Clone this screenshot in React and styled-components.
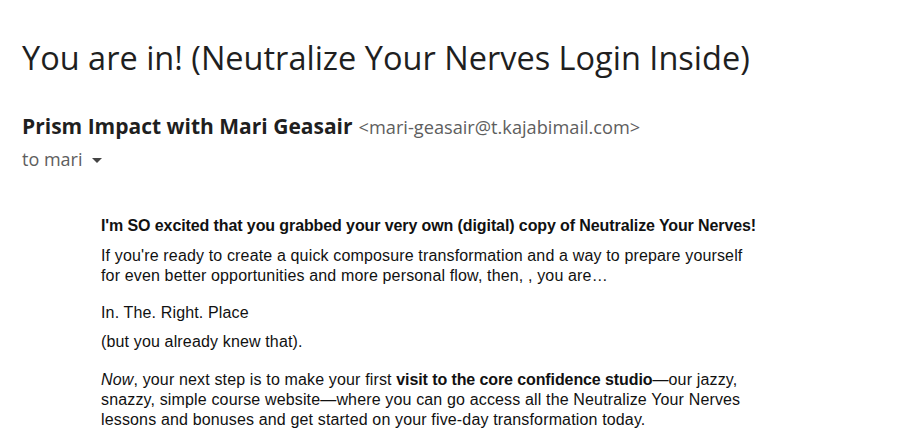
import React from 'react';
import styled, { createGlobalStyle } from 'styled-components';

const Global = createGlobalStyle`
  body {
    margin: 0;
    background: #fff;
    font-family: "Open Sans", Roboto, sans-serif;
  }
`;

const Page = styled.div`
  padding: 38px 0 0 22px;
`;

const Subject = styled.h1`
  margin: 0;
  font-family: "Open Sans", Roboto, sans-serif;
  font-weight: 400;
  font-size: 32.5px;
  line-height: 40px;
  color: #1f1f1f;
`;

const SenderBlock = styled.div`
  margin-top: 35px;
`;

const SenderRow = styled.div`
  display: flex;
  align-items: baseline;
  gap: 6px;
  line-height: 26px;
`;

const SenderName = styled.span`
  font-weight: 700;
  font-size: 21px;
  color: #1f1f1f;
`;

const SenderMail = styled.span`
  font-size: 18.2px;
  color: #5e5e5e;
`;

const ToRow = styled.div`
  display: flex;
  align-items: center;
  gap: 9px;
  margin-top: 8px;
  font-size: 18px;
  line-height: 22px;
  color: #5e5e5e;
`;

const Caret = styled.span`
  width: 0;
  height: 0;
  margin-top: 2px;
  border-left: 5.5px solid transparent;
  border-right: 5.5px solid transparent;
  border-top: 5.5px solid #444;
`;

const Body = styled.div`
  margin: 46px 0 0 79px;
  font-family: "Liberation Sans", Arial, sans-serif;
  font-size: 16px;
  color: #111;

  strong {
    letter-spacing: -0.1px;
  }
`;

const Para = styled.p`
  margin: 0 0 ${p => p.$gap}px;
  line-height: 20px;
  letter-spacing: 0.15px;
`;

export default function App() {
  return (
    <Page>
      <Global />
      <Subject>You are in! (Neutralize Your Nerves Login Inside)</Subject>
      <SenderBlock>
        <SenderRow>
          <SenderName>Prism Impact with Mari Geasair</SenderName>
          <SenderMail>&lt;mari-geasair@t.kajabimail.com&gt;</SenderMail>
        </SenderRow>
        <ToRow>
          to mari <Caret />
        </ToRow>
      </SenderBlock>
      <Body>
        <Para $gap={10}><strong>I'm SO excited that you grabbed your very own (digital) copy of Neutralize Your Nerves!</strong></Para>
        <Para $gap={17}>
          If you're ready to create a quick composure transformation and a way to prepare yourself<br />
          for even better opportunities and more personal flow, then, , you are…
        </Para>
        <Para $gap={9}>In. The. Right. Place</Para>
        <Para $gap={18}>(but you already knew that).</Para>
        <Para $gap={0}>
          <em>Now</em>, your next step is to make your first <strong>visit to the core confidence studio</strong>—our jazzy,<br />
          snazzy, simple course website—where you can go access all the Neutralize Your Nerves<br />
          lessons and bonuses and get started on your five-day transformation today.
        </Para>
      </Body>
    </Page>
  );
}
